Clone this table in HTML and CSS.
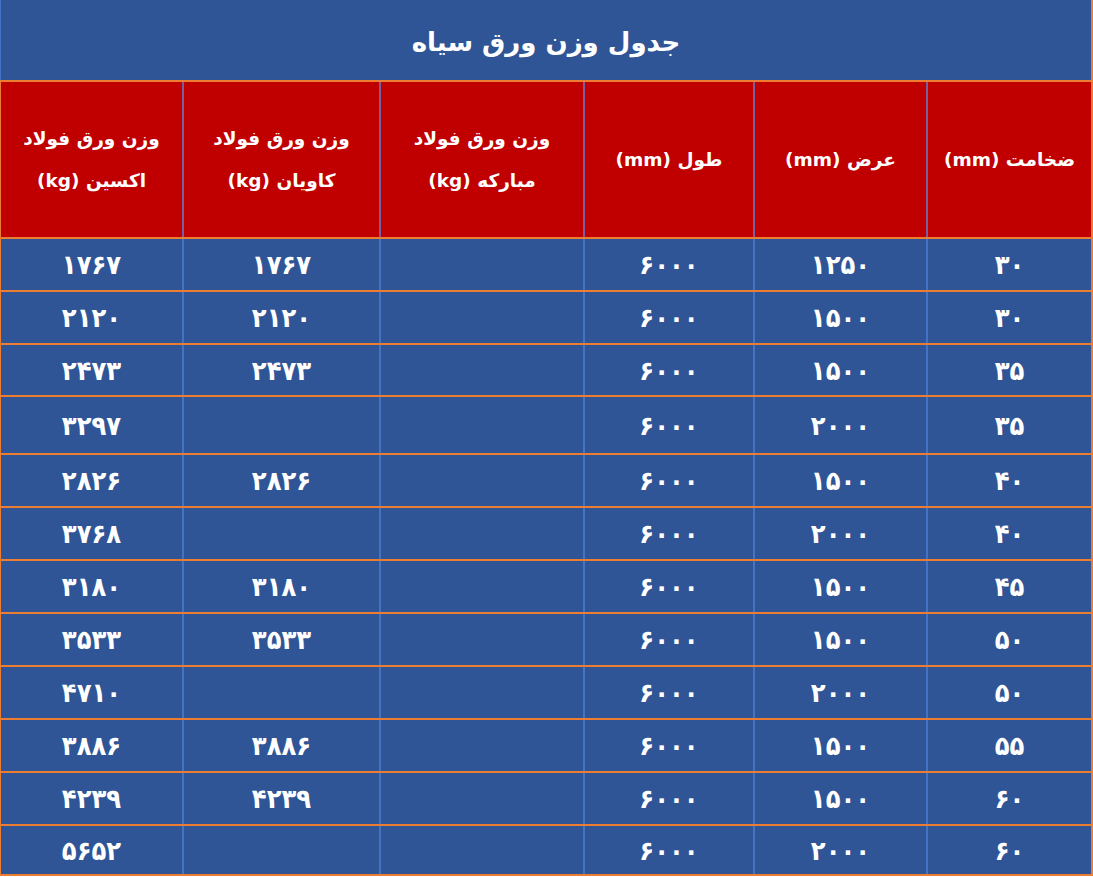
FILE: index.html
```html
<!DOCTYPE html>
<html lang="fa" dir="rtl">
<head>
<meta charset="utf-8">
<title>جدول وزن ورق سیاه</title>
<link rel="stylesheet" href="styles.css">
</head>
<body>
<div class="sheet">
  <div class="title">جدول وزن ورق سیاه</div>
  <div class="row head">
    <div class="cell">ضخامت (mm)</div>
    <div class="cell">عرض (mm)</div>
    <div class="cell">طول (mm)</div>
    <div class="cell">وزن ورق فولاد<br>مبارکه (kg)</div>
    <div class="cell">وزن ورق فولاد<br>کاویان (kg)</div>
    <div class="cell">وزن ورق فولاد<br>اکسین (kg)</div>
  </div>
  <div class="row r53"><div class="cell">۳۰</div><div class="cell">۱۲۵۰</div><div class="cell">۶۰۰۰</div><div class="cell"></div><div class="cell">۱۷۶۷</div><div class="cell">۱۷۶۷</div></div>
  <div class="row r53"><div class="cell">۳۰</div><div class="cell">۱۵۰۰</div><div class="cell">۶۰۰۰</div><div class="cell"></div><div class="cell">۲۱۲۰</div><div class="cell">۲۱۲۰</div></div>
  <div class="row r52"><div class="cell">۳۵</div><div class="cell">۱۵۰۰</div><div class="cell">۶۰۰۰</div><div class="cell"></div><div class="cell">۲۴۷۳</div><div class="cell">۲۴۷۳</div></div>
  <div class="row r58"><div class="cell">۳۵</div><div class="cell">۲۰۰۰</div><div class="cell">۶۰۰۰</div><div class="cell"></div><div class="cell"></div><div class="cell">۳۲۹۷</div></div>
  <div class="row r53"><div class="cell">۴۰</div><div class="cell">۱۵۰۰</div><div class="cell">۶۰۰۰</div><div class="cell"></div><div class="cell">۲۸۲۶</div><div class="cell">۲۸۲۶</div></div>
  <div class="row r53"><div class="cell">۴۰</div><div class="cell">۲۰۰۰</div><div class="cell">۶۰۰۰</div><div class="cell"></div><div class="cell"></div><div class="cell">۳۷۶۸</div></div>
  <div class="row r53"><div class="cell">۴۵</div><div class="cell">۱۵۰۰</div><div class="cell">۶۰۰۰</div><div class="cell"></div><div class="cell">۳۱۸۰</div><div class="cell">۳۱۸۰</div></div>
  <div class="row r53"><div class="cell">۵۰</div><div class="cell">۱۵۰۰</div><div class="cell">۶۰۰۰</div><div class="cell"></div><div class="cell">۳۵۳۳</div><div class="cell">۳۵۳۳</div></div>
  <div class="row r53"><div class="cell">۵۰</div><div class="cell">۲۰۰۰</div><div class="cell">۶۰۰۰</div><div class="cell"></div><div class="cell"></div><div class="cell">۴۷۱۰</div></div>
  <div class="row r53"><div class="cell">۵۵</div><div class="cell">۱۵۰۰</div><div class="cell">۶۰۰۰</div><div class="cell"></div><div class="cell">۳۸۸۶</div><div class="cell">۳۸۸۶</div></div>
  <div class="row r53"><div class="cell">۶۰</div><div class="cell">۱۵۰۰</div><div class="cell">۶۰۰۰</div><div class="cell"></div><div class="cell">۴۲۳۹</div><div class="cell">۴۲۳۹</div></div>
  <div class="row r52 last"><div class="cell">۶۰</div><div class="cell">۲۰۰۰</div><div class="cell">۶۰۰۰</div><div class="cell"></div><div class="cell"></div><div class="cell">۵۶۵۲</div></div>
</div>
</body>
</html>
```

FILE: styles.css
```css
html, body {
  margin: 0;
  padding: 0;
  background: #ffffff;
}

.sheet {
  width: 1093px;
  direction: rtl;
  box-sizing: border-box;
  border-right: 2px solid #ed7d31;
  font-family: "DejaVu Sans", "Liberation Sans", sans-serif;
  color: #ffffff;
  font-weight: bold;
}

.title {
  height: 80px;
  box-sizing: border-box;
  background: #2f5597;
  border-left: 1px solid #4472c4;
  display: flex;
  align-items: center;
  justify-content: center;
  font-size: 26px;
  padding-top: 4px;
}

.row {
  display: grid;
  grid-template-columns: 165px 173px 170px 204px 197px 181px;
  box-sizing: border-box;
  border-top: 2px solid #ed7d31;
  border-left: 1px solid #ed7d31;
  background: #2f5597;
}

.row.last {
  border-bottom: 2px solid #ed7d31;
}

.cell {
  box-sizing: border-box;
  border-left: 2px solid #4472c4;
  display: flex;
  align-items: center;
  justify-content: center;
  text-align: center;
  font-family: "DejaVu Sans Condensed", "DejaVu Sans", sans-serif;
  font-size: 27px;
  line-height: 1;
}

.cell:last-child {
  border-left: none;
}

.head {
  height: 157px;
  background: #c00000;
}

.head .cell {
  border-left-color: #7a5fa0;
  font-family: "DejaVu Sans", "Liberation Sans", sans-serif;
  font-size: 18.5px;
  line-height: 42px;
}

.r53 { height: 53px; }
.r52 { height: 52px; }
.r58 { height: 58px; }
```
